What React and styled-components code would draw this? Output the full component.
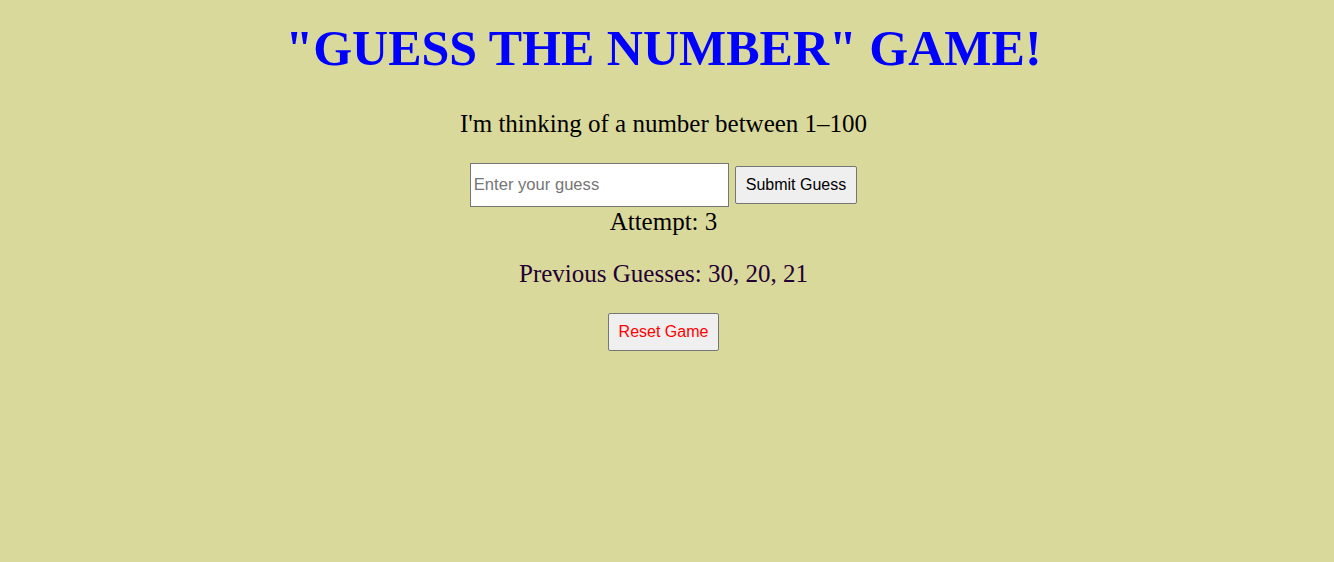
import React from 'react';
import styled, { createGlobalStyle } from 'styled-components';

const GlobalStyle = createGlobalStyle`
  html, body {
    margin: 0;
    padding: 0;
    background-color: #dad99c;
  }
  body {
    font-family: 'Liberation Serif', 'Times New Roman', serif;
    color: #000;
  }
`;

const Page = styled.div`
  display: flex;
  flex-direction: column;
  align-items: center;
  text-align: center;
  padding: 19px 7px 0 0;
`;

const Title = styled.h1`
  margin: 0;
  font-size: 50px;
  line-height: 58px;
  font-weight: bold;
  color: #0000ff;
`;

const Intro = styled.p`
  margin: 32px 0 25px;
  font-size: 25px;
  line-height: 29px;
`;

const GuessRow = styled.form`
  display: flex;
  align-items: center;
  gap: 6px;
  margin: 0;
`;

const GuessInput = styled.input`
  box-sizing: border-box;
  width: 259px;
  height: 44px;
  padding: 0 3px;
  border: 1px solid #767676;
  background: #fff;
  font-family: 'Liberation Sans', Arial, sans-serif;
  font-size: 16.6px;
  outline: none;
  &::placeholder {
    color: #757575;
  }
`;

const Button = styled.button`
  box-sizing: border-box;
  height: 38px;
  padding: 0 10px;
  border: 1px solid #767676;
  border-radius: 2px;
  background-color: #efefef;
  font-family: 'Liberation Sans', Arial, sans-serif;
  font-size: 16px;
  color: ${(props) => (props.$danger ? '#ff0000' : '#000')};
  cursor: pointer;
`;

const Attempt = styled.div`
  font-size: 25px;
  line-height: 29px;
`;

const History = styled.p`
  margin: 23px 0 25px;
  font-size: 25px;
  line-height: 29px;
  color: #220033;
`;

const App = () => {
  const guesses = [30, 20, 21];

  return (
    <Page>
      <GlobalStyle />
      <Title>"GUESS THE NUMBER" GAME!</Title>
      <Intro>I'm thinking of a number between 1–100</Intro>
      <GuessRow onSubmit={(e) => e.preventDefault()}>
        <GuessInput type="number" placeholder="Enter your guess" />
        <Button type="submit">Submit Guess</Button>
      </GuessRow>
      <Attempt>Attempt: {guesses.length}</Attempt>
      <History>Previous Guesses: {guesses.join(', ')}</History>
      <Button $danger type="button">
        Reset Game
      </Button>
    </Page>
  );
};

export default App;
